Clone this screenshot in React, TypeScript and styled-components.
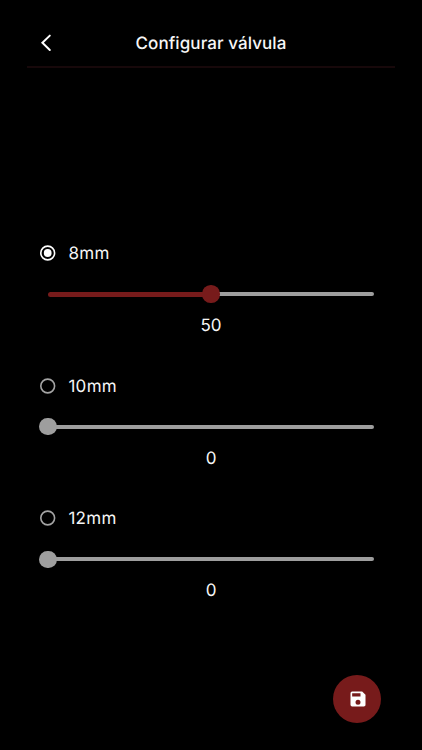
import React from "react";
import styled, { createGlobalStyle } from "styled-components";

const Global = createGlobalStyle`
  * { box-sizing: border-box; }
  body { margin: 0; background: #000; color: #f6f6f6; font-family: Inter, sans-serif; -webkit-font-smoothing: antialiased; text-rendering: geometricPrecision; }
`;

const Screen = styled.main`
  position: relative;
  width: 422px;
  height: 750px;
  background: #000;
  overflow: hidden;
`;

const Header = styled.header`
  height: 68px;
  margin: 0 27px;
  padding-top: 19px;
  border-bottom: 2px solid #17080a;
  display: grid;
  grid-template-columns: 38px 1fr 38px;
  align-items: center;
`;

const BackButton = styled.button`
  border: 0;
  padding: 0;
  background: none;
  display: flex;
  justify-content: center;
`;

const Title = styled.h1`
  margin: 0;
  padding-top: 2px;
  text-align: center;
  font-size: 17px;
  line-height: 22px;
  font-weight: 500;
  letter-spacing: 0.08px;
`;

const Settings = styled.section`
  display: flex;
  flex-direction: column;
  padding: 173.2px 40px 0;
`;

const Valve = styled.div`
  height: 132.6px;
`;

const Option = styled.label`
  display: flex;
  align-items: center;
  gap: 13px;
  height: 24px;
  font-size: 17px;
  letter-spacing: 0.3px;
`;

const OptionName = styled.span`
  padding-top: 2px;
`;

const RadioMark = styled.svg`
  width: 16px;
  height: 16px;
  margin-right: -0.6px;
  flex: none;
`;

const Slider = styled.div`
  height: 18px;
  margin: 20px 8px 0;
  display: flex;
  align-items: center;
`;

const Fill = styled.div`
  height: 5px;
  border-radius: 3px 0 0 3px;
  background: #771b1b;
`;

const Thumb = styled.div<{ $on: boolean }>`
  width: 17.4px;
  height: 17.4px;
  margin: 0 -8.6px 0 -8.8px;
  flex: none;
  z-index: 1;
  border-radius: 50%;
  background: ${(p) => (p.$on ? "#771b1b" : "#9e9e9e")};
`;

const Rest = styled.div`
  flex: 1;
  height: 4px;
  border-radius: 0 2px 2px 0;
  background: #9e9e9e;
`;

const Value = styled.div`
  margin-top: 12px;
  text-align: center;
  font-size: 17px;
  line-height: 22px;
`;

const SaveButton = styled.button`
  position: absolute;
  left: 333px;
  top: 675px;
  width: 48px;
  height: 48px;
  border: 0;
  padding: 0 0 0 1px;
  border-radius: 50%;
  background: #771b1b;
  display: flex;
  align-items: center;
  justify-content: center;
`;

const Radio = ({ on }: { on: boolean }) => (
  <RadioMark viewBox="0 0 16 16">
    <circle cx="7.7" cy="8" r="6.9" fill="none" stroke={on ? "#fff" : "#a4a4a4"} strokeWidth="1.6" />
    {on && <circle cx="7.7" cy="8" r="3.9" fill="#fff" />}
  </RadioMark>
);

const valves = [
  { label: "8mm", value: 50, on: true },
  { label: "10mm", value: 0, on: false },
  { label: "12mm", value: 0, on: false },
];

export default function App() {
  return (
    <Screen>
      <Global />
      <Header>
        <BackButton aria-label="Voltar">
          <svg width="12" height="18" viewBox="0 0 12 18" fill="none" stroke="#fff" strokeWidth="2" strokeLinecap="round">
            <path d="M9.8 1.6 2.4 8.8l7.4 7.2" />
          </svg>
        </BackButton>
        <Title>Configurar válvula</Title>
      </Header>
      <Settings>
        {valves.map((v) => (
          <Valve key={v.label}>
            <Option>
              <Radio on={v.on} />
              <OptionName>{v.label}</OptionName>
            </Option>
            <Slider>
              <Fill style={{ width: `${v.value}%` }} />
              <Thumb $on={v.on} />
              <Rest />
            </Slider>
            <Value>{v.value}</Value>
          </Valve>
        ))}
      </Settings>
      <SaveButton aria-label="Salvar">
        <svg width="20" height="20" viewBox="0 0 24 24" fill="#fff">
          <path d="M17 3H5a2 2 0 0 0-2 2v14a2 2 0 0 0 2 2h14c1.1 0 2-.9 2-2V7l-4-4zm-5 16a3 3 0 1 1 0-6 3 3 0 0 1 0 6zm3-10H5V5h10v4z" />
        </svg>
      </SaveButton>
    </Screen>
  );
}
